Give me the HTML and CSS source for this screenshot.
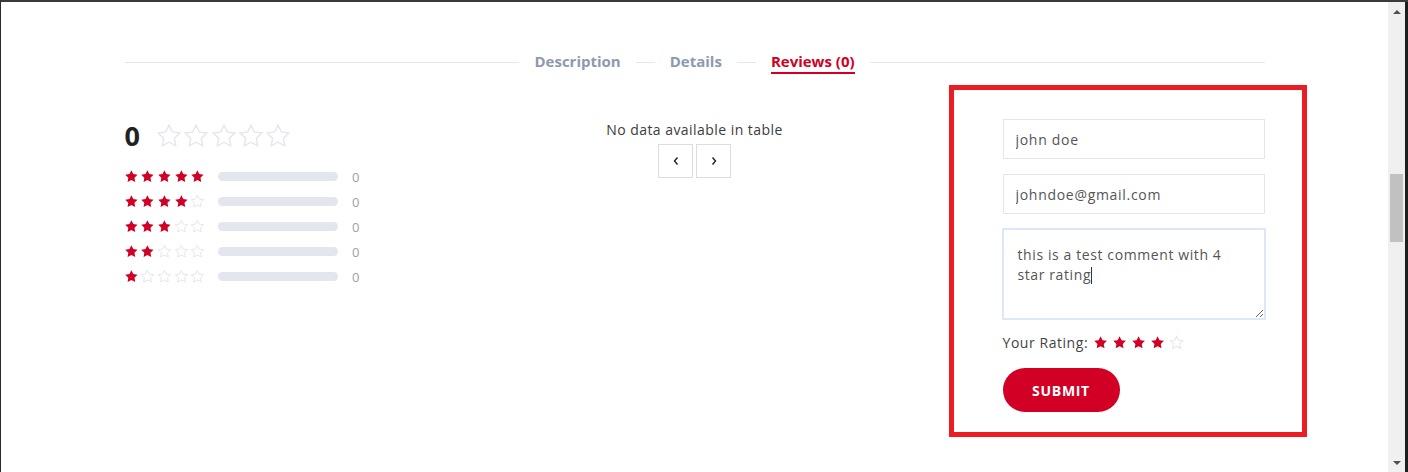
FILE: index.html
```html
<!DOCTYPE html>
<html lang="en">
<head>
<meta charset="utf-8">
<title>Reviews</title>
<link rel="stylesheet" href="styles.css">
</head>
<body>
<svg width="0" height="0" class="defs" aria-hidden="true">
  <symbol id="star" viewBox="0 0 24 24">
    <polygon points="12,2 15.09,8.26 22,9.27 17,14.14 18.18,21.02 12,17.77 5.82,21.02 7,14.14 2,9.27 8.91,8.26"/>
  </symbol>
</svg>
<div class="screen">
  <div class="page">
    <div class="container">
      <nav class="tabs">
        <span class="tab-line grow"></span>
        <a class="tab">Description</a>
        <span class="tab-line short"></span>
        <a class="tab">Details</a>
        <span class="tab-line short"></span>
        <a class="tab active">Reviews (0)</a>
        <span class="tab-line grow"></span>
      </nav>

      <div class="reviews">
        <div class="rating-col">
          <div class="avg">
            <span class="avg-num">0</span>
            <div class="stars big">
              <svg class="off"><use href="#star"/></svg>
              <svg class="off"><use href="#star"/></svg>
              <svg class="off"><use href="#star"/></svg>
              <svg class="off"><use href="#star"/></svg>
              <svg class="off"><use href="#star"/></svg>
            </div>
          </div>
          <ul class="breakdown">
            <li>
              <div class="stars small">
                <svg class="on"><use href="#star"/></svg><svg class="on"><use href="#star"/></svg><svg class="on"><use href="#star"/></svg><svg class="on"><use href="#star"/></svg><svg class="on"><use href="#star"/></svg>
              </div>
              <div class="bar"><div class="fill" style="width:0%"></div></div>
              <span class="count">0</span>
            </li>
            <li>
              <div class="stars small">
                <svg class="on"><use href="#star"/></svg><svg class="on"><use href="#star"/></svg><svg class="on"><use href="#star"/></svg><svg class="on"><use href="#star"/></svg><svg class="off"><use href="#star"/></svg>
              </div>
              <div class="bar"><div class="fill" style="width:0%"></div></div>
              <span class="count">0</span>
            </li>
            <li>
              <div class="stars small">
                <svg class="on"><use href="#star"/></svg><svg class="on"><use href="#star"/></svg><svg class="on"><use href="#star"/></svg><svg class="off"><use href="#star"/></svg><svg class="off"><use href="#star"/></svg>
              </div>
              <div class="bar"><div class="fill" style="width:0%"></div></div>
              <span class="count">0</span>
            </li>
            <li>
              <div class="stars small">
                <svg class="on"><use href="#star"/></svg><svg class="on"><use href="#star"/></svg><svg class="off"><use href="#star"/></svg><svg class="off"><use href="#star"/></svg><svg class="off"><use href="#star"/></svg>
              </div>
              <div class="bar"><div class="fill" style="width:0%"></div></div>
              <span class="count">0</span>
            </li>
            <li>
              <div class="stars small">
                <svg class="on"><use href="#star"/></svg><svg class="off"><use href="#star"/></svg><svg class="off"><use href="#star"/></svg><svg class="off"><use href="#star"/></svg><svg class="off"><use href="#star"/></svg>
              </div>
              <div class="bar"><div class="fill" style="width:0%"></div></div>
              <span class="count">0</span>
            </li>
          </ul>
        </div>

        <div class="list-col">
          <p class="empty">No data available in table</p>
          <div class="pager">
            <button class="page-btn" type="button" aria-label="Previous">
              <svg viewBox="0 0 8 10"><polyline points="5.5,1.5 2.5,5 5.5,8.5"/></svg>
            </button>
            <button class="page-btn" type="button" aria-label="Next">
              <svg viewBox="0 0 8 10"><polyline points="2.5,1.5 5.5,5 2.5,8.5"/></svg>
            </button>
          </div>
        </div>

        <div class="form-col">
          <form class="review-form">
            <input class="field" type="text" value="john doe" readonly>
            <input class="field" type="text" value="johndoe@gmail.com" readonly>
            <div class="field area">this is a test comment with 4 star rating<span class="caret"></span></div>
            <div class="your-rating">
              <span class="label">Your Rating:</span>
              <div class="stars input">
                <svg class="on"><use href="#star"/></svg><svg class="on"><use href="#star"/></svg><svg class="on"><use href="#star"/></svg><svg class="on"><use href="#star"/></svg><svg class="off"><use href="#star"/></svg>
              </div>
            </div>
            <button class="submit" type="button">SUBMIT</button>
          </form>
        </div>
      </div>
    </div>
  </div>
  <div class="scrollbar">
    <span class="arrow up"></span>
    <div class="track"><div class="thumb"></div></div>
    <span class="arrow down"></span>
  </div>
  <div class="edge"></div>
</div>
</body>
</html>
```

FILE: styles.css
```css
* { box-sizing: border-box; }

html, body {
  margin: 0;
  padding: 0;
  background: #ffffff;
}

body {
  font-family: "Open Sans", "Liberation Sans", sans-serif;
  color: #333;
}

.defs { position: absolute; }

.screen {
  display: flex;
  height: 472px;
  border-top: 2px solid #3a3a3a;
  border-left: 1px solid #2a2a2a;
  overflow: hidden;
}

.page {
  flex: 1;
  background: #fff;
  overflow: hidden;
}

.container {
  width: 1140px;
  margin: 0 auto;
  padding-top: 49px;
}

/* Tabs */
.tabs {
  display: flex;
  align-items: flex-start;
}

.tab-line {
  height: 1px;
  background: #e6e6ea;
  margin-top: 11px;
}
.tab-line.grow { flex: 1; }
.tab-line.short { width: 19px; }

.tab {
  padding: 0 15px;
  font-size: 15px;
  font-weight: 700;
  line-height: 20px;
  color: #8d9aad;
  text-decoration: none;
}
.tab.active {
  color: #d10024;
}
.tab.active::after {
  content: "";
  display: block;
  height: 2px;
  background: #d10024;
  margin-top: 1px;
}

/* Reviews layout */
.reviews {
  display: grid;
  grid-template-columns: 380px 380px 380px;
  margin-top: 11px;
}

/* Rating column */
.rating-col {
  padding-top: 35px;
}

.avg {
  display: flex;
  align-items: center;
  gap: 16px;
}

.avg-num {
  font-size: 27px;
  font-weight: 700;
  color: #222;
  line-height: 32px;
}

.stars {
  display: flex;
}
.stars svg { display: block; flex: none; }
.stars .on { fill: #d10024; }
.stars .off { fill: none; stroke: #e3e6ee; stroke-width: 1.4; }

.stars.big { gap: 1.3px; }
.stars.big svg { width: 26px; height: 26px; }
.stars.big .off { stroke-width: 1.3; }

.breakdown {
  list-style: none;
  margin: 12px 0 0;
  padding: 0;
}
.breakdown li {
  display: flex;
  align-items: center;
  height: 25px;
}
.stars.small { gap: 1.9px; margin-left: -1px; }
.stars.small svg { width: 14.8px; height: 14.8px; }
.stars.small .off { stroke-width: 1.6; }

.bar {
  width: 120px;
  height: 9px;
  border-radius: 5px;
  background: #e4e6ee;
  margin-left: 13px;
  overflow: hidden;
}
.bar .fill { height: 100%; background: #d10024; }

.count {
  margin-left: 14px;
  font-size: 13px;
  color: #9aa2ad;
}

/* List column */
.list-col {
  padding-top: 36px;
  display: flex;
  flex-direction: column;
  align-items: center;
}

.empty {
  margin: 0;
  font-size: 14px;
  letter-spacing: 0.45px;
  line-height: 18px;
  color: #3c3c3c;
}

.pager {
  display: flex;
  gap: 3px;
  margin-top: 5px;
}

.page-btn {
  width: 35px;
  height: 34px;
  border: 1px solid #dddddd;
  background: #fff;
  padding: 0;
  display: flex;
  align-items: center;
  justify-content: center;
}
.page-btn svg {
  width: 8px;
  height: 10px;
  fill: none;
  stroke: #222;
  stroke-width: 1.4;
}

/* Form column */
.form-col {
  display: flex;
}

.review-form {
  margin-left: 64px;
  margin-right: -42px;
  width: 358px;
  border: 5px solid #ed1c24;
  padding: 29px 37px 20px 49px;
  display: flex;
  flex-direction: column;
  align-items: flex-start;
}

.field {
  width: 262px;
  height: 40px;
  border: 1px solid #e4e6ee;
  padding: 0 12px;
  font-family: inherit;
  font-size: 14px;
  letter-spacing: 0.7px;
  color: #555;
  background: #fff;
  outline: none;
  margin: 0 0 15px;
}

.field.area {
  height: 92px;
  margin: -1px 0 0 -1px;
  width: 264px;
  border: 2px solid #dde7f6;
  padding: 15px 14px;
  letter-spacing: 0.6px;
  line-height: 20px;
  resize: vertical;
  overflow: auto;
}

.caret {
  display: inline-block;
  width: 1px;
  height: 17px;
  background: #333;
  vertical-align: -4px;
}

.your-rating {
  display: flex;
  align-items: center;
  margin-top: 13px;
  gap: 5px;
}
.your-rating .label {
  font-size: 14px;
  letter-spacing: 0.55px;
  color: #444;
}
.stars.input { gap: 3.8px; }
.stars.input svg { width: 15.2px; height: 15.2px; }
.stars.input .off { stroke-width: 1.6; }

.submit {
  margin-top: 16px;
  width: 117px;
  height: 44px;
  border: none;
  border-radius: 22px;
  background: #d10024;
  color: #fff;
  font-family: inherit;
  font-size: 14px;
  font-weight: 700;
  letter-spacing: 0.7px;
}

/* Scrollbar */
.scrollbar {
  width: 17px;
  background: #f0f0f0;
  display: flex;
  flex-direction: column;
  align-items: center;
}
.arrow {
  width: 0;
  height: 0;
  border-left: 4px solid transparent;
  border-right: 4px solid transparent;
}
.arrow.up {
  margin-top: 8px;
  border-bottom: 4px solid #505050;
}
.arrow.down {
  margin-bottom: 7px;
  border-top: 4px solid #505050;
}
.track {
  flex: 1;
  width: 100%;
  padding: 0 2px;
}
.thumb {
  margin-top: 160px;
  height: 68px;
  background: #c1c1c1;
}

.edge {
  width: 3px;
  background: #1e1e1e;
}
```
